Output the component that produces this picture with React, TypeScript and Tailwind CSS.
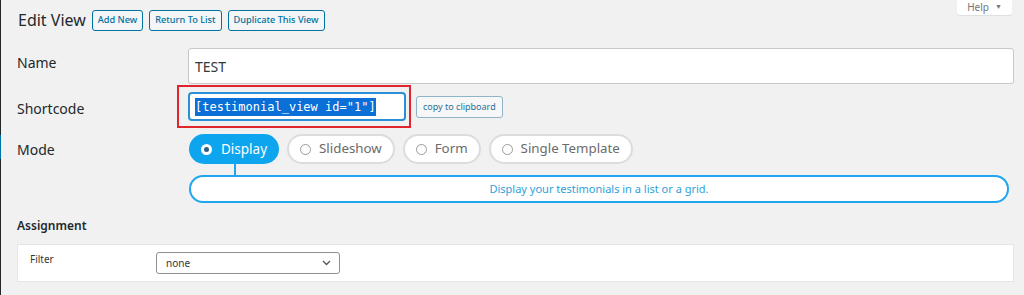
import React from 'react';

const font = "font-['Noto_Sans','Open_Sans',sans-serif]";

function Radio({ checked }: { checked?: boolean }) {
  return checked ? (
    <span className="w-[11px] h-[11px] rounded-full bg-white flex items-center justify-center">
      <span className="w-[5px] h-[5px] rounded-full bg-[#2c5f86]" />
    </span>
  ) : (
    <span className="w-[11px] h-[11px] rounded-full border border-[#9a9a9a] bg-white" />
  );
}

export default function App() {
  const modes = ['Display', 'Slideshow', 'Form', 'Single Template'];

  return (
    <div className={`w-[1024px] h-[295px] bg-[#f1f1f1] flex overflow-hidden ${font}`}>
      {/* admin sidebar edge */}
      <div className="w-[2px] flex flex-col bg-[#23282d]">
        <div className="h-[135px]" />
        <div className="h-[24px] bg-[#0073aa]" />
      </div>

      <div className="flex-1 pl-[16px] pr-[10px]">
        {/* header */}
        <div className="flex items-start">
          <div className="flex items-center gap-[6px] pt-[9px]">
            <h1 className="text-[16px] text-[#23282d] ml-[1px] leading-[22px]">Edit View</h1>
            {['Add New', 'Return To List', 'Duplicate This View'].map((b) => (
              <button
                key={b}
                className="h-[21px] px-[5px] text-[9.2px] font-medium text-[#0071a1] border border-[#0071a1] bg-[#f3f5f6] rounded-[3px] leading-none"
              >
                {b}
              </button>
            ))}
          </div>
          <div className="ml-auto mr-[2px] w-[55px] h-[15px] bg-white rounded-b-[3px] shadow-[0_1px_1px_rgba(0,0,0,0.08)] flex items-center justify-center gap-[6px] text-[10px] text-[#72777c]">
            <span>Help</span>
            <span className="text-[7px]">▼</span>
          </div>
        </div>

        {/* form */}
        <div className="grid grid-cols-[171px_1fr] mt-[17px]">
          <div className="text-[14px] text-[#23282d] pt-[4px]">Name</div>
          <div className="h-[36px] bg-white border border-[#c7c7c7] rounded-[3px] flex items-center px-[6px] text-[14px] text-[#32373c]">
            TEST
          </div>

          <div className="text-[14px] text-[#23282d] pt-[14px]">Shortcode</div>
          <div className="flex items-center pt-[1px]">
            <div className="ml-[-11px] border-2 border-[#e0252f] pl-[9px] pr-[3px] py-[5px]">
              <div className="w-[218px] h-[29px] bg-white border-2 border-[#2b8fd6] rounded-[4px] flex items-center px-[5px]">
                <span className="whitespace-nowrap bg-[#0a6fd6] text-white text-[12px] leading-[18px] font-['DejaVu_Sans_Mono',monospace]">
                  [testimonial_view id="1"]
                </span>
              </div>
            </div>
            <button className="ml-[5px] h-[22px] px-[6px] text-[9px] text-[#2c6f96] bg-[#f7f7f7] border border-[#8fb3c9] rounded-[3px] leading-none">
              copy to clipboard
            </button>
          </div>

          <div className="text-[14px] text-[#23282d] pt-[11px]">Mode</div>
          <div className="pt-[6px] pl-[1px]">
            <div className="flex gap-[8px]">
              {modes.map((m, i) => (
                <div
                  key={m}
                  className={
                    i === 0
                      ? 'h-[30px] px-[12px] rounded-full bg-[#0ea5ef] text-white flex items-center gap-[9px] text-[13.5px]'
                      : 'h-[30px] px-[11px] rounded-full bg-white border-2 border-[#dcdcdc] text-[#6b6b6b] flex items-center gap-[8px] text-[13.3px]'
                  }
                >
                  <Radio checked={i === 0} />
                  <span>{m}</span>
                </div>
              ))}
            </div>
            <div className="ml-[45px] w-[2px] h-[11px] bg-[#1fa6f0]" />
            <div className="w-[820px] h-[28px] rounded-full border-2 border-[#1fa6f0] bg-white flex items-center justify-center text-[11px] text-[#2f9fdc]">
              Display your testimonials in a list or a grid.
            </div>
          </div>
        </div>

        <div className="mt-[14px] text-[12px] font-semibold text-[#23282d]">Assignment</div>

        <div className="mt-[9px] w-[997px] h-[38px] bg-white border border-[#e5e5e5] flex items-center">
          <div className="w-[138px] pl-[12px] text-[10px] text-[#32373c] self-start pt-[7px]">Filter</div>
          <div className="w-[184px] h-[22px] border border-[#8c8f94] rounded-[3px] flex items-center justify-between pl-[9px] pr-[8px] text-[10px] text-[#32373c]">
            <span>none</span>
            <svg width="9" height="6" viewBox="0 0 9 6" fill="none">
              <path d="M1 1l3.5 3.5L8 1" stroke="#555" strokeWidth="1.3" />
            </svg>
          </div>
        </div>
      </div>
    </div>
  );
}
